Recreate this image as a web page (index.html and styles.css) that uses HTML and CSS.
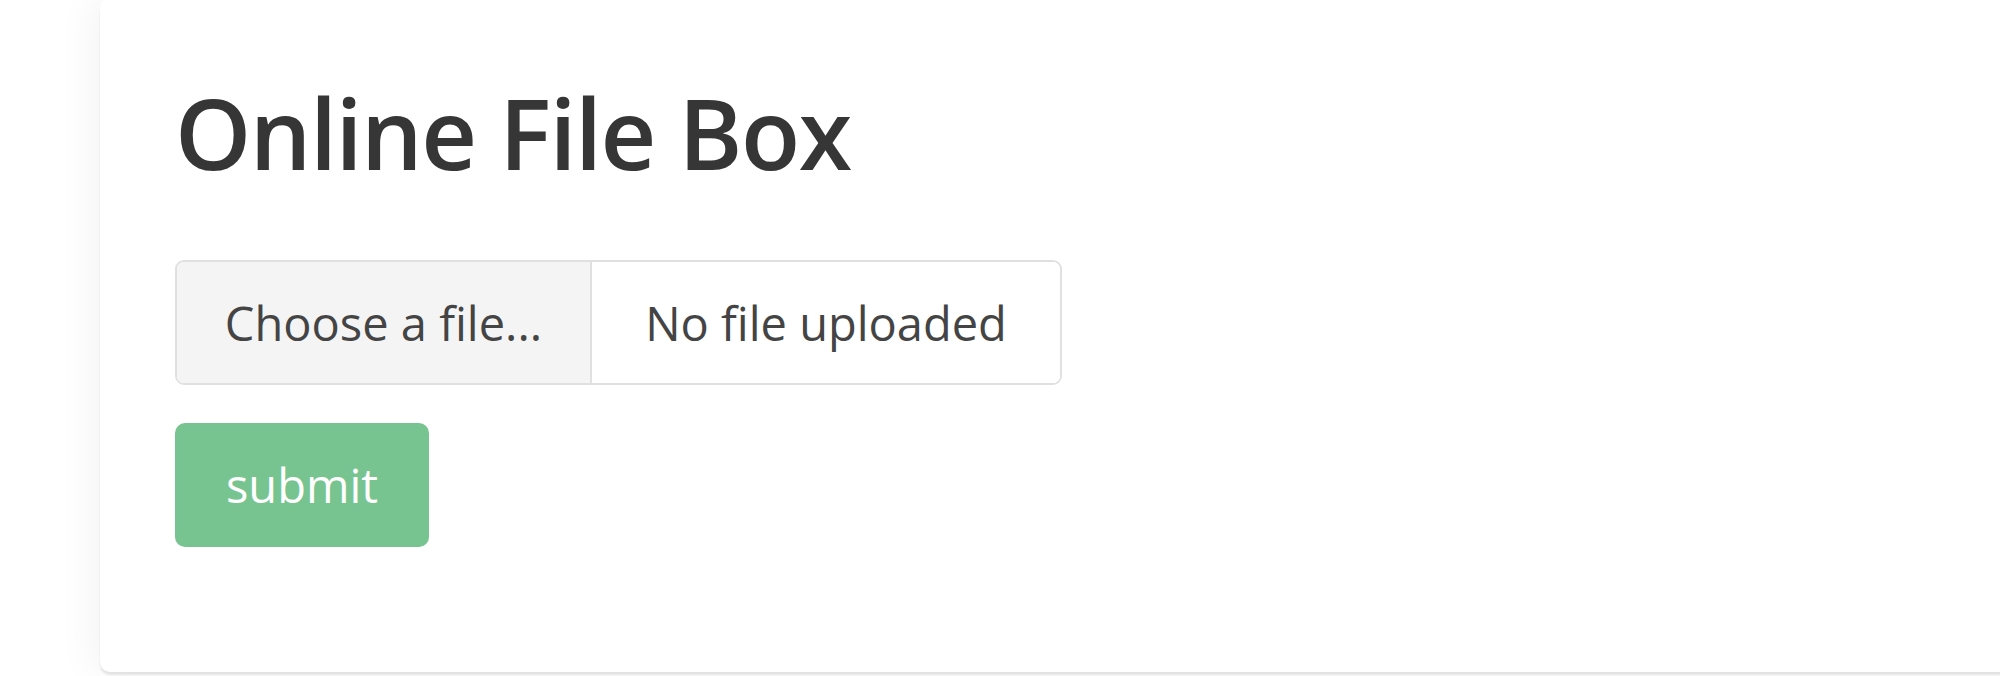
FILE: index.html
```html
<!DOCTYPE html>
<html lang="en">
<head>
<meta charset="utf-8">
<title>Online File Box</title>
<link rel="stylesheet" href="styles.css">
</head>
<body>
<main class="card">
  <h1 class="title">Online File Box</h1>
  <form class="upload-form">
    <div class="file-group">
      <label class="file-choose">Choose a file...</label>
      <span class="file-name">No file uploaded</span>
    </div>
    <button type="button" class="submit-btn">submit</button>
  </form>
</main>
</body>
</html>
```
FILE: styles.css
```css
html, body {
  margin: 0;
  padding: 0;
  background: #ffffff;
  overflow: hidden;
}
body {
  width: 2000px;
  height: 676px;
  font-family: "Open Sans", "Noto Sans", sans-serif;
}
.card {
  box-sizing: border-box;
  margin: -2px 0 0 100px;
  width: 1960px;
  height: 674px;
  background: #ffffff;
  border-radius: 10px;
  box-shadow: 0 3px 2px rgba(0, 0, 0, 0.09), -6px 0 40px rgba(0, 0, 0, 0.05);
  padding: 74px 75px 0 75px;
}
.title {
  margin: 0;
  font-size: 97px;
  line-height: 120px;
  font-weight: 600;
  color: #363636;
  letter-spacing: -1.5px;
}
.upload-form {
  display: flex;
  flex-direction: column;
  align-items: flex-start;
  margin-top: 68px;
  gap: 38px;
}
.file-group {
  display: flex;
  height: 125px;
  box-sizing: border-box;
  border: 2px solid #e0e0e0;
  border-radius: 9px;
  overflow: hidden;
  font-size: 47px;
  color: #444444;
}
.file-choose {
  box-sizing: border-box;
  width: 415px;
  display: flex;
  align-items: center;
  justify-content: center;
  background: #f4f4f4;
  border-right: 2px solid #e0e0e0;
}
.file-name {
  box-sizing: border-box;
  width: 468px;
  display: flex;
  align-items: center;
  justify-content: center;
  background: #ffffff;
}
.submit-btn {
  box-sizing: border-box;
  width: 254px;
  height: 124px;
  border: none;
  border-radius: 10px;
  background: #78c491;
  color: #ffffff;
  font-family: "Open Sans", "Noto Sans", sans-serif;
  font-size: 47px;
  padding: 0;
}
```
